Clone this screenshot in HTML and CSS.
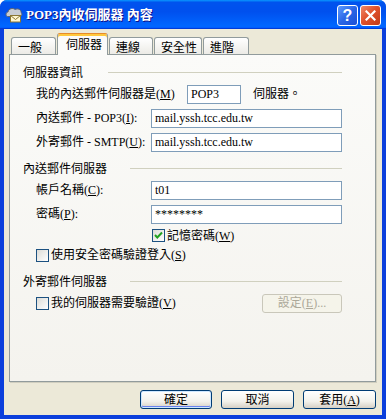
FILE: index.html
```html
<!DOCTYPE html>
<html lang="zh-Hant">
<head>
    <meta charset="UTF-8">
    <title>POP3內收伺服器 內容</title>
    <link rel="stylesheet" href="styles.css">
</head>
<body>

<div class="window">
    <div class="titlebar">
        <svg class="app-icon" width="18" height="16" viewBox="0 0 18 16">
            <path d="M2.5 9.5 C0.5 9 0.5 5.5 3 5 C3.5 1.5 8 0.5 10 2.5 C12.5 1 16.5 2.5 16 5.5 C17.5 6.5 17 9.5 14.5 9.5 Z" fill="#c8ccd2" stroke="#5d6573"/>
            <rect x="5.5" y="8.5" width="10" height="6.5" fill="#fff6cf" stroke="#8a7733"/>
            <path d="M5.5 8.5 L10.5 12.5 L15.5 8.5" fill="none" stroke="#8a7733"/>
        </svg>
        <span class="title">POP3內收伺服器 內容</span>
        <div class="caption-buttons">
            <span class="cap-btn cap-help">?</span>
            <span class="cap-btn cap-close">
                <svg width="11" height="11" viewBox="0 0 11 11">
                    <path d="M1.5 1.5 L9.5 9.5 M9.5 1.5 L1.5 9.5" stroke="#fff" stroke-width="2.2" stroke-linecap="square"/>
                </svg>
            </span>
        </div>
    </div>

    <div class="client">
        <div class="tabs">
            <span class="tab tab-general">一般</span>
            <span class="tab tab-server active">伺服器</span>
            <span class="tab tab-conn">連線</span>
            <span class="tab tab-sec">安全性</span>
            <span class="tab tab-adv">進階</span>
        </div>

        <div class="panel">
            <div class="group-title first"><span>伺服器資訊</span><i class="rule"></i></div>

            <div class="row">
                <label class="label label-type">我的內送郵件伺服器是(<u>M</u>)</label>
                <input class="field field-short" type="text" value="POP3">
                <span class="suffix">伺服器。</span>
            </div>
            <div class="row">
                <label class="label">內送郵件 - POP3(<u>I</u>):</label>
                <input class="field" type="text" value="mail.yssh.tcc.edu.tw">
            </div>
            <div class="row">
                <label class="label">外寄郵件 - SMTP(<u>U</u>):</label>
                <input class="field" type="text" value="mail.yssh.tcc.edu.tw">
            </div>

            <div class="group-title"><span>內送郵件伺服器</span><i class="rule"></i></div>

            <div class="row">
                <label class="label">帳戶名稱(<u>C</u>):</label>
                <input class="field" type="text" value="t01">
            </div>
            <div class="row">
                <label class="label">密碼(<u>P</u>):</label>
                <input class="field" type="text" value="********">
            </div>
            <div class="check-row indent">
                <span class="check">
                    <svg width="11" height="11" viewBox="0 0 11 11">
                        <path d="M2 5 L4.3 7.5 L9 2.5" fill="none" stroke="#21a121" stroke-width="2"/>
                    </svg>
                </span>
                <span>記憶密碼(<u>W</u>)</span>
            </div>
            <div class="check-row second">
                <span class="check"></span>
                <span>使用安全密碼驗證登入(<u>S</u>)</span>
            </div>

            <div class="group-title third"><span>外寄郵件伺服器</span><i class="rule"></i></div>

            <div class="row row-auth">
                <div class="check-inline">
                    <span class="check"></span>
                    <span>我的伺服器需要驗證(<u>V</u>)</span>
                </div>
                <button class="btn btn-disabled" disabled>設定(<u>E</u>)...</button>
            </div>
        </div>

        <div class="actions">
            <button class="btn btn-default">確定</button>
            <button class="btn">取消</button>
            <button class="btn">套用(<u>A</u>)</button>
        </div>
    </div>
</div>

</body>
</html>
```

FILE: styles.css
```css
body {
    margin: 0;
    background: #fff;
    font-family: "Liberation Serif", "Noto Sans CJK TC", serif;
    font-size: 12px;
    line-height: 14px;
    color: #000;
}
.window {
    width: 386px;
    height: 419px;
    background: #0b3fdc;
    border-radius: 7px 7px 0 0;
    overflow: hidden;
    display: flex;
    flex-direction: column;
}
.titlebar {
    height: 29px;
    flex: none;
    display: flex;
    align-items: center;
    padding: 0 5px 0 5px;
    background: linear-gradient(180deg, #0997ff, #0053ee 8%, #0050ee 40%, #0066ff 88%, #0066ff 93%, #005bff 95%, #003dd7 96%, #003dd7);
}
.app-icon {
    flex: none;
    margin-top: 1px;
}
.title {
    margin-left: 3px;
    color: #fff;
    font-weight: bold;
    font-size: 13px;
    text-shadow: 1px 1px #0f1089;
    flex: 1;
}
.caption-buttons {
    display: flex;
    gap: 2px;
    margin-top: 2px;
}
.cap-btn {
    width: 21px;
    height: 21px;
    box-sizing: border-box;
    border: 1px solid #fff;
    border-radius: 3px;
    display: flex;
    align-items: center;
    justify-content: center;
    color: #fff;
    font-family: "Liberation Sans", sans-serif;
    font-weight: bold;
    font-size: 16px;
}
.cap-help {
    background: linear-gradient(135deg, #5d9bff, #2a66e6 50%, #1b4fd6);
}
.cap-close {
    background: linear-gradient(135deg, #ef8a6a, #e0522c 45%, #c23a17);
}

.client {
    flex: 1;
    margin: 0 4px 4px 4px;
    background: #ece9d8;
    display: flex;
    flex-direction: column;
}

.tabs {
    height: 25px;
    flex: none;
    display: flex;
    align-items: flex-end;
    padding-left: 7px;
    position: relative;
    z-index: 1;
}
.tab {
    height: 17px;
    box-sizing: border-box;
    padding: 2px 0 0 6px;
    border: 1px solid #919b9c;
    border-bottom: none;
    border-radius: 3px 3px 0 0;
    background: linear-gradient(#fff, #ecebe6);
    font-family: "Noto Sans CJK TC", sans-serif;
}
.tab + .tab {
    margin-left: 1px;
}
.tab.active {
    height: 22px;
    margin-bottom: -1px;
    padding: 3px 0 0 8px;
    border-top: 1px solid #e68b2c;
    box-shadow: inset 0 2px #ffc83c;
    background: #fbfbf9;
}
.tab-general { width: 45px; }
.tab-server { width: 51px; }
.tab-conn { width: 44px; }
.tab-sec { width: 48px; }
.tab-adv { width: 46px; }

.panel {
    height: 328px;
    flex: none;
    box-sizing: border-box;
    margin-left: 5px;
    width: 367px;
    border: 1px solid #919b9c;
    box-shadow: 1px 1px #d0cebf;
    background: linear-gradient(#fbfbf9, #f4f3ee);
    padding: 0 33px 0 13px;
}

.group-title {
    display: flex;
    align-items: center;
    height: 14px;
    margin-top: 7px;
}
.group-title.first {
    margin-top: 10px;
}
.group-title.third {
    margin-top: 9px;
}
.group-title span {
    font-family: "Noto Sans CJK TC", sans-serif;
}
.rule {
    flex: 1;
    margin-left: 23px;
    border-top: 1px solid #d0d0bf;
}
.group-title.first .rule {
    margin-left: 25px;
}

.row {
    display: flex;
    align-items: center;
    height: 24px;
    margin-left: 13px;
}
.group-title + .row {
    margin-top: 3px;
}
.label {
    width: 115px;
    flex: none;
}
.label-type {
    width: 151px;
}
.field {
    flex: 1;
    height: 19px;
    box-sizing: border-box;
    border: 1px solid #7f9db9;
    background: #fff;
    padding: 0 3px;
    margin: 0;
    font-family: "Liberation Serif", serif;
    font-size: 12px;
    color: #000;
    outline: none;
}
.field-short {
    flex: none;
    width: 54px;
}
.suffix {
    margin-left: 12px;
}

.check-row {
    display: flex;
    align-items: center;
    margin-left: 13px;
    height: 19px;
}
.check-row.indent {
    padding-left: 116px;
}
.check-row.second {
    height: 20px;
}
.check-inline {
    display: flex;
    align-items: center;
    flex: 1;
}
.check {
    width: 13px;
    height: 13px;
    box-sizing: border-box;
    border: 1px solid #1c5180;
    background: linear-gradient(135deg, #dcdcd7, #fff);
    margin-right: 2px;
    display: flex;
    align-items: center;
    justify-content: center;
}

.btn {
    height: 19px;
    box-sizing: border-box;
    border: 1px solid #003c74;
    border-radius: 3px;
    background: linear-gradient(#fff, #f3f2ec 60%, #d6d0c5);
    font-family: "Liberation Serif", "Noto Sans CJK TC", serif;
    font-size: 12px;
    line-height: 14px;
    color: #000;
    padding: 0;
}
.btn-disabled {
    width: 80px;
    border-color: #c9c7ba;
    background: #f5f4ea;
    color: #aca899;
}
.btn-default {
    box-shadow: inset 0 0 0 1px #cee7ff, inset 0 -1px 0 1px #6982ee;
}

.actions {
    display: flex;
    justify-content: flex-end;
    gap: 9px;
    padding: 8px 6px 0 0;
}
.actions .btn {
    width: 73px;
}
.actions .btn-default {
    width: 72px;
}
```
